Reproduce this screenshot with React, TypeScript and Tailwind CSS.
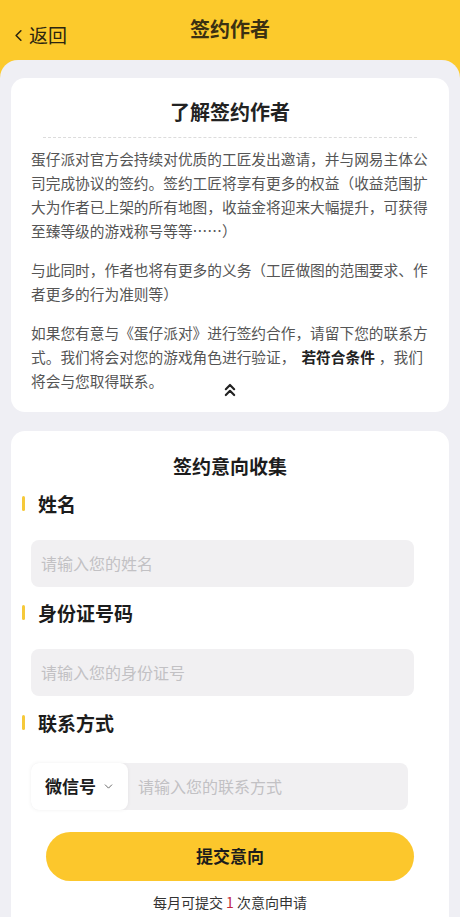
import { ChevronLeft, ChevronDown, ChevronsUp } from 'lucide-react';

const font = { fontFamily: '"Noto Sans CJK SC", "Noto Sans", sans-serif' };

function Label({ text }: { text: string }) {
  return (
    <div className="flex items-center gap-[13px] pl-[11px]">
      <div className="w-[3px] h-[15px] rounded-full bg-[#f6c93a]" />
      <span className="text-[19px] font-bold text-[#1c1c1c] leading-none">{text}</span>
    </div>
  );
}

function Field({ placeholder }: { placeholder: string }) {
  return (
    <div className="mx-[20px] mr-[35px] h-[47px] rounded-[8px] bg-[#f1f0f2] flex items-center px-[10px]">
      <span className="text-[16px] text-[#c2c1c4]">{placeholder}</span>
    </div>
  );
}

export default function App() {
  return (
    <div className="w-[460px] h-[917px] overflow-hidden bg-[#fcca2c]" style={font}>
      {/* Header */}
      <div className="relative h-[60px] flex items-center justify-center">
        <div className="absolute left-[9px] top-[21px] flex items-center text-[#2b2510]">
          <ChevronLeft className="w-[19px] h-[19px]" strokeWidth={2} />
          <span className="text-[19px] ml-[1px]">返回</span>
        </div>
        <h1 className="text-[20px] font-bold text-[#3b3012] -mt-[2px]">签约作者</h1>
      </div>

      {/* Body */}
      <div className="bg-[#efeff4] rounded-t-[18px] h-full px-[11px] pt-[18px]">
        <div className="bg-white rounded-[14px] h-[334px] px-[20px] pt-[19px]">
          <h2 className="text-center text-[20px] font-bold text-[#222]">了解签约作者</h2>
          <div className="mt-[10px] mx-[12px] border-t border-dashed border-[#dcdcdc]" />
          <div className="mt-[9px] text-[14.7px] leading-[24px] text-[#555] space-y-[15px]">
            <p>蛋仔派对官方会持续对优质的工匠发出邀请，并与网易主体公司完成协议的签约。签约工匠将享有更多的权益（收益范围扩大为作者已上架的所有地图，收益金将迎来大幅提升，可获得至臻等级的游戏称号等等……）</p>
            <p>与此同时，作者也将有更多的义务（工匠做图的范围要求、作者更多的行为准则等）</p>
            <p>
              如果您有意与《蛋仔派对》进行签约合作，请留下您的联系方式。我们将会对您的游戏角色进行验证，<span className="ml-[6px] mr-[4px] font-bold text-[#222]">若符合条件</span>，我们将会与您取得联系。
            </p>
          </div>
          <div className="flex justify-center -mt-[13px]">
            <ChevronsUp className="w-[20px] h-[20px] text-[#222]" strokeWidth={2.6} />
          </div>
        </div>

        <div className="mt-[19px] bg-white rounded-t-[14px] h-[520px] pt-[21px]">
          <h2 className="text-center text-[19px] font-bold text-[#1c1c1c]">签约意向收集</h2>
          <div className="mt-[13px]">
            <Label text="姓名" />
          </div>
          <div className="mt-[27px]">
            <Field placeholder="请输入您的姓名" />
          </div>
          <div className="mt-[16px]">
            <Label text="身份证号码" />
          </div>
          <div className="mt-[27px]">
            <Field placeholder="请输入您的身份证号" />
          </div>
          <div className="mt-[17px]">
            <Label text="联系方式" />
          </div>
          <div className="mt-[31px] ml-[20px] mr-[41px] h-[47px] flex rounded-[8px] bg-[#f1f0f2]">
            <div className="w-[97px] rounded-[8px] bg-white shadow-[0_0_4px_rgba(0,0,0,0.06)] flex items-center pl-[14px] gap-[6px]">
              <span className="text-[17px] font-bold text-[#1c1c1c]">微信号</span>
              <ChevronDown className="w-[13px] h-[13px] text-[#555]" strokeWidth={1.6} />
            </div>
            <div className="flex items-center pl-[10px]">
              <span className="text-[16px] text-[#c2c1c4]">请输入您的联系方式</span>
            </div>
          </div>
          <button className="mt-[22px] ml-[35px] w-[368px] h-[49px] rounded-full bg-[#fcc72c] flex items-center justify-center">
            <span className="text-[17px] font-bold text-[#1c1c1c]">提交意向</span>
          </button>
          <p className="mt-[11px] text-center text-[14px] text-[#333]">
            每月可提交 <span className="text-[#c0283c]">1</span> 次意向申请
          </p>
        </div>
      </div>
    </div>
  );
}
